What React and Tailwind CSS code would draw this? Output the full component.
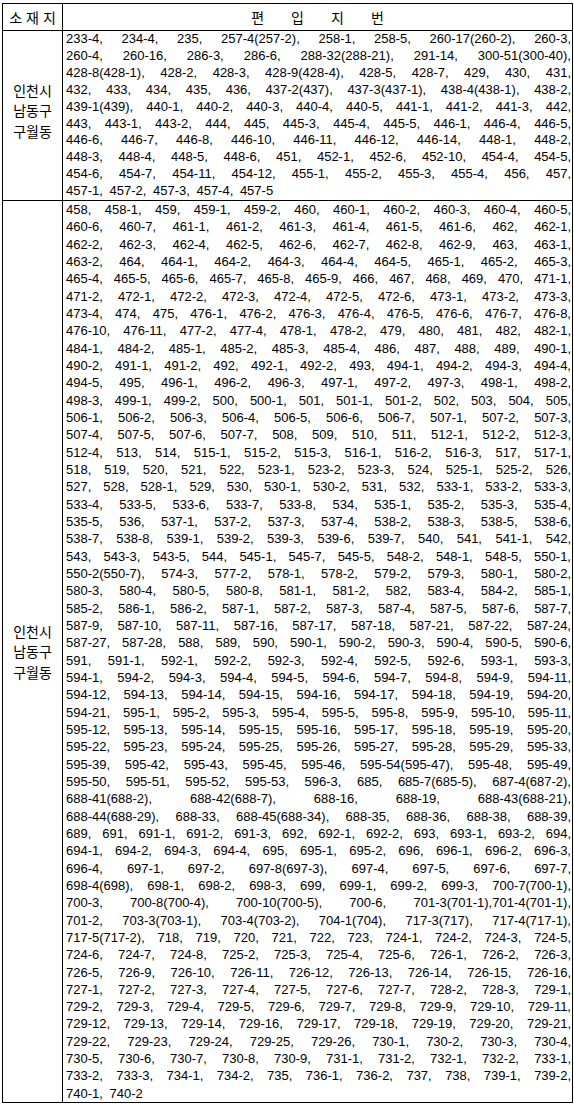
const row1 = [
  '233-4, 234-4, 235, 257-4(257-2), 258-1, 258-5, 260-17(260-2), 260-3,',
  '260-4, 260-16, 286-3, 286-6, 288-32(288-21), 291-14, 300-51(300-40),',
  '428-8(428-1), 428-2, 428-3, 428-9(428-4), 428-5, 428-7, 429, 430, 431,',
  '432, 433, 434, 435, 436, 437-2(437), 437-3(437-1), 438-4(438-1), 438-2,',
  '439-1(439), 440-1, 440-2, 440-3, 440-4, 440-5, 441-1, 441-2, 441-3, 442,',
  '443, 443-1, 443-2, 444, 445, 445-3, 445-4, 445-5, 446-1, 446-4, 446-5,',
  '446-6, 446-7, 446-8, 446-10, 446-11, 446-12, 446-14, 448-1, 448-2,',
  '448-3, 448-4, 448-5, 448-6, 451, 452-1, 452-6, 452-10, 454-4, 454-5,',
  '454-6, 454-7, 454-11, 454-12, 455-1, 455-2, 455-3, 455-4, 456, 457,',
  '457-1, 457-2, 457-3, 457-4, 457-5',
];

const row2 = [
  '458, 458-1, 459, 459-1, 459-2, 460, 460-1, 460-2, 460-3, 460-4, 460-5,',
  '460-6, 460-7, 461-1, 461-2, 461-3, 461-4, 461-5, 461-6, 462, 462-1,',
  '462-2, 462-3, 462-4, 462-5, 462-6, 462-7, 462-8, 462-9, 463, 463-1,',
  '463-2, 464, 464-1, 464-2, 464-3, 464-4, 464-5, 465-1, 465-2, 465-3,',
  '465-4, 465-5, 465-6, 465-7, 465-8, 465-9, 466, 467, 468, 469, 470, 471-1,',
  '471-2, 472-1, 472-2, 472-3, 472-4, 472-5, 472-6, 473-1, 473-2, 473-3,',
  '473-4, 474, 475, 476-1, 476-2, 476-3, 476-4, 476-5, 476-6, 476-7, 476-8,',
  '476-10, 476-11, 477-2, 477-4, 478-1, 478-2, 479, 480, 481, 482, 482-1,',
  '484-1, 484-2, 485-1, 485-2, 485-3, 485-4, 486, 487, 488, 489, 490-1,',
  '490-2, 491-1, 491-2, 492, 492-1, 492-2, 493, 494-1, 494-2, 494-3, 494-4,',
  '494-5, 495, 496-1, 496-2, 496-3, 497-1, 497-2, 497-3, 498-1, 498-2,',
  '498-3, 499-1, 499-2, 500, 500-1, 501, 501-1, 501-2, 502, 503, 504, 505,',
  '506-1, 506-2, 506-3, 506-4, 506-5, 506-6, 506-7, 507-1, 507-2, 507-3,',
  '507-4, 507-5, 507-6, 507-7, 508, 509, 510, 511, 512-1, 512-2, 512-3,',
  '512-4, 513, 514, 515-1, 515-2, 515-3, 516-1, 516-2, 516-3, 517, 517-1,',
  '518, 519, 520, 521, 522, 523-1, 523-2, 523-3, 524, 525-1, 525-2, 526,',
  '527, 528, 528-1, 529, 530, 530-1, 530-2, 531, 532, 533-1, 533-2, 533-3,',
  '533-4, 533-5, 533-6, 533-7, 533-8, 534, 535-1, 535-2, 535-3, 535-4,',
  '535-5, 536, 537-1, 537-2, 537-3, 537-4, 538-2, 538-3, 538-5, 538-6,',
  '538-7, 538-8, 539-1, 539-2, 539-3, 539-6, 539-7, 540, 541, 541-1, 542,',
  '543, 543-3, 543-5, 544, 545-1, 545-7, 545-5, 548-2, 548-1, 548-5, 550-1,',
  '550-2(550-7), 574-3, 577-2, 578-1, 578-2, 579-2, 579-3, 580-1, 580-2,',
  '580-3, 580-4, 580-5, 580-8, 581-1, 581-2, 582, 583-4, 584-2, 585-1,',
  '585-2, 586-1, 586-2, 587-1, 587-2, 587-3, 587-4, 587-5, 587-6, 587-7,',
  '587-9, 587-10, 587-11, 587-16, 587-17, 587-18, 587-21, 587-22, 587-24,',
  '587-27, 587-28, 588, 589, 590, 590-1, 590-2, 590-3, 590-4, 590-5, 590-6,',
  '591, 591-1, 592-1, 592-2, 592-3, 592-4, 592-5, 592-6, 593-1, 593-3,',
  '594-1, 594-2, 594-3, 594-4, 594-5, 594-6, 594-7, 594-8, 594-9, 594-11,',
  '594-12, 594-13, 594-14, 594-15, 594-16, 594-17, 594-18, 594-19, 594-20,',
  '594-21, 595-1, 595-2, 595-3, 595-4, 595-5, 595-8, 595-9, 595-10, 595-11,',
  '595-12, 595-13, 595-14, 595-15, 595-16, 595-17, 595-18, 595-19, 595-20,',
  '595-22, 595-23, 595-24, 595-25, 595-26, 595-27, 595-28, 595-29, 595-33,',
  '595-39, 595-42, 595-43, 595-45, 595-46, 595-54(595-47), 595-48, 595-49,',
  '595-50, 595-51, 595-52, 595-53, 596-3, 685, 685-7(685-5), 687-4(687-2),',
  '688-41(688-2), 688-42(688-7), 688-16, 688-19, 688-43(688-21),',
  '688-44(688-29), 688-33, 688-45(688-34), 688-35, 688-36, 688-38, 688-39,',
  '689, 691, 691-1, 691-2, 691-3, 692, 692-1, 692-2, 693, 693-1, 693-2, 694,',
  '694-1, 694-2, 694-3, 694-4, 695, 695-1, 695-2, 696, 696-1, 696-2, 696-3,',
  '696-4, 697-1, 697-2, 697-8(697-3), 697-4, 697-5, 697-6, 697-7,',
  '698-4(698), 698-1, 698-2, 698-3, 699, 699-1, 699-2, 699-3, 700-7(700-1),',
  '700-3, 700-8(700-4), 700-10(700-5), 700-6, 701-3(701-1),701-4(701-1),',
  '701-2, 703-3(703-1), 703-4(703-2), 704-1(704), 717-3(717), 717-4(717-1),',
  '717-5(717-2), 718, 719, 720, 721, 722, 723, 724-1, 724-2, 724-3, 724-5,',
  '724-6, 724-7, 724-8, 725-2, 725-3, 725-4, 725-6, 726-1, 726-2, 726-3,',
  '726-5, 726-9, 726-10, 726-11, 726-12, 726-13, 726-14, 726-15, 726-16,',
  '727-1, 727-2, 727-3, 727-4, 727-5, 727-6, 727-7, 728-2, 728-3, 729-1,',
  '729-2, 729-3, 729-4, 729-5, 729-6, 729-7, 729-8, 729-9, 729-10, 729-11,',
  '729-12, 729-13, 729-14, 729-16, 729-17, 729-18, 729-19, 729-20, 729-21,',
  '729-22, 729-23, 729-24, 729-25, 729-26, 730-1, 730-2, 730-3, 730-4,',
  '730-5, 730-6, 730-7, 730-8, 730-9, 731-1, 731-2, 732-1, 732-2, 733-1,',
  '733-2, 733-3, 734-1, 734-2, 735, 736-1, 736-2, 737, 738, 739-1, 739-2,',
  '740-1, 740-2',
];

const Place = ({ className = '' }) => (
  <div className={`w-[60px] shrink-0 border-r border-black flex flex-col items-center justify-center text-[14px] leading-[20.5px] font-['Noto_Sans_CJK_KR',sans-serif] ${className}`}>
    <span>인천시</span>
    <span>남동구</span>
    <span>구월동</span>
  </div>
);

const Lots = ({ lines, leading }) => (
  <div className={`flex-1 pl-[3px] pr-[1px] text-[13px] ${leading}`}>
    {lines.map((line, i) =>
      i === lines.length - 1 ? (
        <div key={i} className="text-left [word-spacing:3px]">{line}</div>
      ) : (
        <div key={i} className="text-justify [text-align-last:justify]">{line}</div>
      )
    )}
  </div>
);

export default function App() {
  return (
    <div className="bg-white text-black pl-[2px] pt-[3px] font-['Liberation_Sans',sans-serif]">
      <div className="w-[571px] border border-black">
        {/* header */}
        <div className="flex h-[27px] border-b border-black font-['Noto_Sans_CJK_KR',sans-serif] text-[14px]">
          <div className="w-[60px] shrink-0 border-r border-black flex items-center justify-center gap-[4px]">
            <span>소</span>
            <span>재</span>
            <span>지</span>
          </div>
          <div className="flex-1 flex items-center justify-center gap-[27px]">
            <span>편</span>
            <span>입</span>
            <span>지</span>
            <span>번</span>
          </div>
        </div>

        <div className="flex border-b border-black">
          <Place className="pb-[10px]" />
          <Lots lines={row1} leading="leading-[16.9px]" />
        </div>

        <div className="flex">
          <Place />
          <Lots lines={row2} leading="leading-[17.33px]" />
        </div>
      </div>
    </div>
  );
}
